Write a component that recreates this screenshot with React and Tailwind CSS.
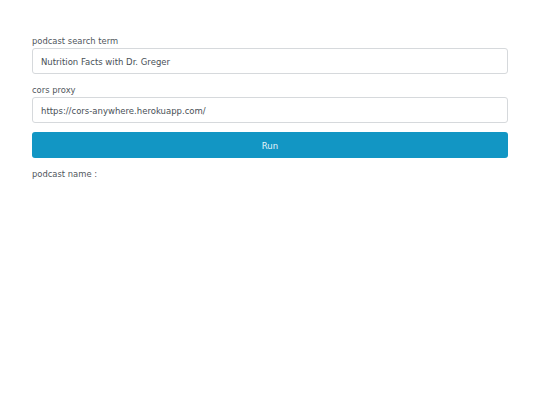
import React, { useState } from 'react';

const font = { fontFamily: '"DejaVu Sans", Verdana, sans-serif' };

const Field = ({ label, value, onChange }) => (
  <div className="mb-[9px]">
    <label className="block text-[8.4px] leading-[14px] mb-0 text-[#50565c]">{label}</label>
    <input
      className="block w-full h-[26px] px-[8px] pt-[1px] text-[8.5px] text-[#495057] bg-white border border-[#d6d9dc] rounded-[3px] outline-none"
      value={value}
      onChange={(e) => onChange(e.target.value)}
    />
  </div>
);

export default function App() {
  const [term, setTerm] = useState('Nutrition Facts with Dr. Greger');
  const [proxy, setProxy] = useState('https://cors-anywhere.herokuapp.com/');

  return (
    <div className="w-[540px] h-[405px] bg-white px-[32px] pt-[34px]" style={font}>
      <Field label="podcast search term" value={term} onChange={setTerm} />
      <Field label="cors proxy" value={proxy} onChange={setProxy} />
      <button className="block w-full h-[26px] pt-[2px] rounded-[3px] bg-[#1296c4] text-[8.5px] text-[#e6f4fa] mb-[9px]">
        Run
      </button>
      <div className="text-[8.4px] leading-[14px] text-[#50565c]">podcast name :</div>
    </div>
  );
}
